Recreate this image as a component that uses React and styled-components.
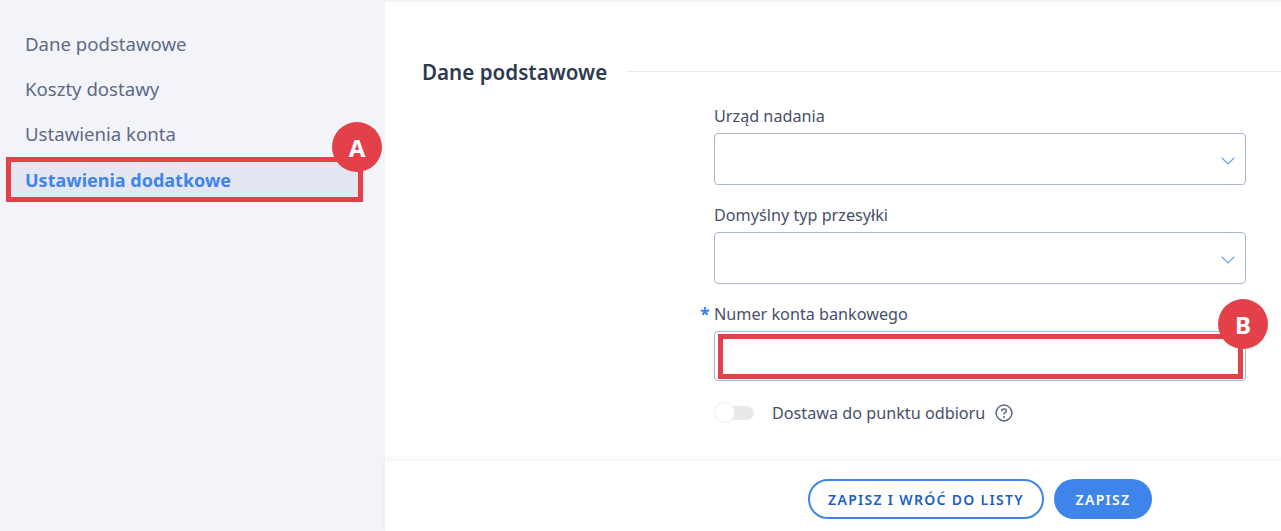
import React from "react";
import styled, { createGlobalStyle } from "styled-components";

const FONT = `"Noto Sans", "Open Sans", sans-serif`;

const GlobalStyle = createGlobalStyle`
    * {
        box-sizing: border-box;
    }
    html, body {
        margin: 0;
        padding: 0;
        background: #ffffff;
        font-family: ${FONT};
    }
`;

const menuItems = ["Dane podstawowe", "Koszty dostawy", "Ustawienia konta"];

export default function App() {
    return (
        <>
            <GlobalStyle />
            <Page>
                <Sidebar>
                    {menuItems.map((name) => (
                        <MenuItem key={name}>{name}</MenuItem>
                    ))}
                    <MenuItem $active>
                        Ustawienia dodatkowe
                        <MenuMarker />
                        <BadgeA>A</BadgeA>
                    </MenuItem>
                </Sidebar>
                <Main>
                    <Content>
                        <SectionHeader>
                            <SectionTitle>Dane podstawowe</SectionTitle>
                            <SectionLine />
                        </SectionHeader>
                        <Form>
                            <Field>
                                <Label>Urząd nadania</Label>
                                <SelectBox>
                                    <Chevron />
                                </SelectBox>
                            </Field>
                            <Field>
                                <Label>Domyślny typ przesyłki</Label>
                                <SelectBox>
                                    <Chevron />
                                </SelectBox>
                            </Field>
                            <Field>
                                <Label $required>Numer konta bankowego</Label>
                                <InputBox>
                                    <InputMarker />
                                    <BadgeB>B</BadgeB>
                                </InputBox>
                            </Field>
                            <SwitchRow>
                                <Switch>
                                    <SwitchKnob />
                                </Switch>
                                <SwitchLabel>Dostawa do punktu odbioru</SwitchLabel>
                                <HelpIcon />
                            </SwitchRow>
                        </Form>
                    </Content>
                    <Footer>
                        <OutlineButton>ZAPISZ I WRÓĆ DO LISTY</OutlineButton>
                        <FilledButton>ZAPISZ</FilledButton>
                    </Footer>
                </Main>
            </Page>
        </>
    );
}

function Chevron() {
    return (
        <ChevronSvg width="14" height="8" viewBox="0 0 14 8" fill="none">
            <path d="M0.7 0.8 L7 7 L13.3 0.8" stroke="#6ea3ee" strokeWidth="1.2" />
        </ChevronSvg>
    );
}

function HelpIcon() {
    return (
        <HelpSvg width="18" height="18" viewBox="0 0 18 18" fill="none">
            <circle cx="9" cy="9" r="7.9" stroke="#5a6580" strokeWidth="1.5" />
            <path
                d="M6.6 7.2 C6.6 5.8 7.7 5 9 5 C10.4 5 11.4 5.9 11.4 7 C11.4 8.6 9 8.6 9 10.4"
                stroke="#5a6580"
                strokeWidth="1.5"
            />
            <circle cx="9" cy="12.9" r="1" fill="#5a6580" />
        </HelpSvg>
    );
}

const Page = styled.div`
    display: flex;
    width: 100%;
    height: 531px;
    overflow: hidden;
`;

const Sidebar = styled.nav`
    width: 385px;
    flex-shrink: 0;
    background: #f2f4f9;
    padding: 22px 20px 0 10px;
    display: flex;
    flex-direction: column;
`;

const MenuItem = styled.div`
    position: relative;
    height: 45px;
    padding: 0 0 ${(p) => (p.$active ? "0" : "2px")} 15px;
    display: flex;
    align-items: center;
    font-size: ${(p) => (p.$active ? "18px" : "18.6px")};
    font-weight: ${(p) => (p.$active ? 700 : 400)};
    color: ${(p) => (p.$active ? "#3f84ea" : "#5f6a85")};
    background: ${(p) => (p.$active ? "#e4e7f1" : "transparent")};
    border-radius: 0 5px 5px 0;
`;

const MenuMarker = styled.div`
    position: absolute;
    left: -4px;
    top: 0;
    width: 357px;
    height: 45px;
    border: 5px solid #e4404a;
`;

const Badge = styled.div`
    position: absolute;
    width: 50px;
    height: 50px;
    border-radius: 50%;
    background: #e4404a;
    color: #ffffff;
    font-size: 24px;
    font-weight: 700;
    display: flex;
    align-items: center;
    justify-content: center;
`;

const BadgeA = styled(Badge)`
    left: 322px;
    top: -35px;
`;

const BadgeB = styled(Badge)`
    left: 503px;
    top: -33px;
`;

const Main = styled.main`
    flex: 1;
    display: flex;
    flex-direction: column;
    padding-top: 2px;
    background: #f2f4f9;
`;

const Content = styled.div`
    flex: 1;
    background: #ffffff;
    padding-top: 54px;
`;

const SectionHeader = styled.div`
    display: flex;
    align-items: center;
    padding-left: 37px;
    height: 32px;
`;

const SectionTitle = styled.h2`
    margin: 0;
    font-size: 20.6px;
    line-height: 32px;
    font-weight: 600;
    color: #2e3a50;
`;

const SectionLine = styled.div`
    flex: 1;
    height: 1px;
    margin-left: 19px;
    margin-top: -1px;
    background: #e8eaee;
`;

const Form = styled.div`
    width: 532px;
    margin-left: 329px;
    margin-top: 15px;
    display: flex;
    flex-direction: column;
`;

const Field = styled.div`
    display: flex;
    flex-direction: column;
    margin-bottom: 17px;
`;

const Label = styled.label`
    position: relative;
    height: 30px;
    line-height: 26px;
    font-size: 16.2px;
    color: #46506a;

    &::before {
        content: ${(p) => (p.$required ? '"*"' : "none")};
        position: absolute;
        left: -14px;
        top: 0;
        color: #3f84ea;
        font-size: 18px;
        font-weight: 700;
    }
`;

const SelectBox = styled.div`
    position: relative;
    height: 52px;
    border: 1px solid #aab5cf;
    border-radius: 4px;
    background: #ffffff;
`;

const InputBox = styled.div`
    position: relative;
    height: 50px;
    border: 1px solid #aab5cf;
    border-radius: 4px;
    background: #ffffff;
`;

const InputMarker = styled.div`
    position: absolute;
    left: 3px;
    top: 2px;
    width: 525px;
    height: 45px;
    border: 5px solid #e4404a;
`;

const ChevronSvg = styled.svg`
    position: absolute;
    right: 10px;
    top: 23px;
`;

const SwitchRow = styled.div`
    display: flex;
    align-items: center;
    height: 24px;
    margin-top: 3px;
`;

const Switch = styled.div`
    position: relative;
    width: 40px;
    height: 14px;
    margin-right: 18px;
    border-radius: 7px;
    background: #e9e9eb;
`;

const SwitchKnob = styled.div`
    position: absolute;
    left: 0;
    top: -4px;
    width: 21px;
    height: 21px;
    border-radius: 50%;
    background: #ffffff;
    border: 1px solid #eceef2;
`;

const SwitchLabel = styled.span`
    font-size: 16.2px;
    color: #46506a;
`;

const HelpSvg = styled.svg`
    margin-left: 10px;
`;

const Footer = styled.footer`
    height: 70px;
    background: #ffffff;
    box-shadow: 0 -2px 5px rgba(30, 40, 70, 0.07);
    display: flex;
    align-items: flex-start;
    padding: 18px 0 0 423px;
    gap: 10px;
    position: relative;
`;

const BaseButton = styled.button`
    height: 40px;
    border-radius: 20px;
    font-family: ${FONT};
    font-size: 14px;
    font-weight: 600;
    letter-spacing: 1.3px;
    white-space: nowrap;
    display: flex;
    align-items: center;
    justify-content: center;
    padding: 0;
`;

const OutlineButton = styled(BaseButton)`
    width: 236px;
    background: #ffffff;
    color: #1b5fc7;
    border: 2px solid #3f84ea;
`;

const FilledButton = styled(BaseButton)`
    width: 98px;
    background: #3f84ea;
    color: #ffffff;
    border: none;
`;
